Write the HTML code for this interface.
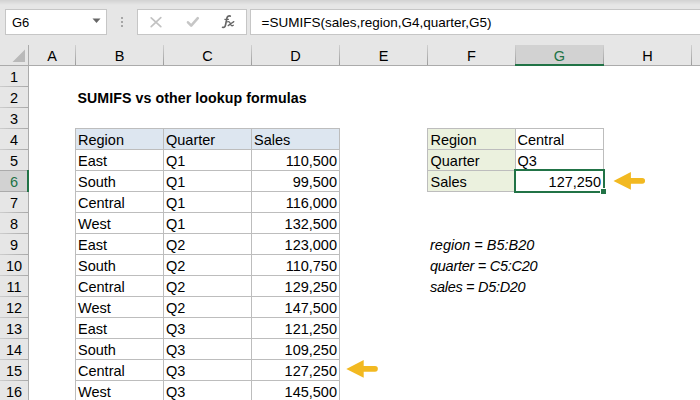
<!DOCTYPE html>
<html><head><meta charset="utf-8">
<style>
*{margin:0;padding:0;box-sizing:border-box}
html,body{width:700px;height:400px;overflow:hidden;background:#fff}
body{position:relative;font-family:"Liberation Sans",sans-serif;color:#000}
.a{position:absolute}
.box{background:#fff;border:1px solid #c6c6c6;top:9px;height:26px}
.dot{width:2px;height:2px;background:#a6a6a6}
.t{position:absolute;white-space:nowrap;font-size:14.5px;line-height:16px}
.vs{position:absolute;width:1px;background:linear-gradient(#d0d0d0,#9c9c9c)}
.r{text-align:right}
.c{text-align:center}
</style></head><body>
<div class="a" style="left:0px;top:0px;width:700px;height:65px;background:#e6e6e6;"></div>
<div class="a" style="left:0px;top:0px;width:700px;height:5px;background:linear-gradient(#d2d2d2 0%,#d8d8d8 30%,#e6e6e6 100%);"></div>
<div class="a box" style="left:5px;width:102px"></div>
<div class="t" style="left:12px;top:15.3px;font-size:13px">G6</div>
<svg class="a" style="left:92px;top:18px" width="9" height="6"><path d="M0.5 0.5 L8.5 0.5 L4.5 5 Z" fill="#666"/></svg>
<div class="a dot" style="left:121px;top:17px"></div>
<div class="a dot" style="left:121px;top:21px"></div>
<div class="a dot" style="left:121px;top:25px"></div>
<div class="a box" style="left:137px;width:110px"></div>
<svg class="a" style="left:148px;top:15px" width="16" height="14"><path d="M3.2 2.8 L12.8 11.6 M12.8 2.6 L3.2 11.6" stroke="#c2c2c2" stroke-width="1.7" fill="none" stroke-linecap="round"/></svg>
<svg class="a" style="left:184px;top:15px" width="17" height="14"><path d="M4 7.3 L7.2 10.6 L13.8 3.2" stroke="#c6c6c6" stroke-width="2.6" fill="none" stroke-linecap="round" stroke-linejoin="round"/></svg>
<svg class="a" style="left:218px;top:12px" width="20" height="20"><path d="M4.6 15.3 C6.3 16 7.2 14.6 7.6 12.6 L8.9 6.2 C9.3 4.3 10.5 3.6 12.3 4.1" stroke="#666" stroke-width="1.7" fill="none" stroke-linecap="round"/><path d="M6.4 7.4 L10.9 7.4" stroke="#666" stroke-width="1.2"/><path d="M9.6 9.8 C10.8 9.3 11.6 9.9 12.1 11 L13.1 13.1 C13.5 13.9 14.3 13.9 15.3 13.3 M15.8 9.6 C14.2 10.6 12.2 12.4 10.2 13.6" stroke="#666" stroke-width="1.3" fill="none" stroke-linecap="round"/></svg>
<div class="a box" style="left:250px;width:460px"></div>
<div class="t" style="left:261.5px;top:15px;font-size:13.5px">=SUMIFS(sales,region,G4,quarter,G5)</div>
<div class="a" style="left:516px;top:45px;width:87px;height:19px;background:#d2d2d2;"></div>
<div class="a" style="left:0px;top:65px;width:515px;height:1px;background:#ababab;"></div>
<div class="a" style="left:604px;top:65px;width:96px;height:1px;background:#ababab;"></div>
<svg class="a" style="left:12px;top:49px" width="14" height="14"><path d="M0.5 13 L13 13 L13 0.5 Z" fill="#b9b9b9"/></svg>
<div class="vs" style="left:28px;top:45px;height:20px"></div>
<div class="vs" style="left:75px;top:45px;height:20px"></div>
<div class="vs" style="left:163px;top:45px;height:20px"></div>
<div class="vs" style="left:251px;top:45px;height:20px"></div>
<div class="vs" style="left:339px;top:45px;height:20px"></div>
<div class="vs" style="left:427px;top:45px;height:20px"></div>
<div class="vs" style="left:515px;top:45px;height:20px"></div>
<div class="vs" style="left:603px;top:45px;height:20px"></div>
<div class="vs" style="left:691px;top:45px;height:20px"></div>
<div class="a" style="left:515px;top:64px;width:89px;height:2px;background:#217346;"></div>
<div class="t c" style="left:29px;top:48px;width:46px">A</div>
<div class="t c" style="left:76px;top:48px;width:87px">B</div>
<div class="t c" style="left:164px;top:48px;width:87px">C</div>
<div class="t c" style="left:252px;top:48px;width:87px">D</div>
<div class="t c" style="left:340px;top:48px;width:87px">E</div>
<div class="t c" style="left:428px;top:48px;width:87px">F</div>
<div class="t c" style="left:516px;top:48px;width:87px;color:#217346">G</div>
<div class="t c" style="left:604px;top:48px;width:87px">H</div>
<div class="a" style="left:0px;top:66px;width:28px;height:334px;background:#e6e6e6;"></div>
<div class="a" style="left:28px;top:45px;width:1px;height:355px;background:#ababab;"></div>
<div class="a" style="left:0px;top:86px;width:28px;height:1px;background:linear-gradient(to right,#cdcdcd,#a9a9a9);"></div>
<div class="t c" style="left:0px;top:69px;width:28px">1</div>
<div class="a" style="left:0px;top:107px;width:28px;height:1px;background:linear-gradient(to right,#cdcdcd,#a9a9a9);"></div>
<div class="t c" style="left:0px;top:90px;width:28px">2</div>
<div class="a" style="left:0px;top:128px;width:28px;height:1px;background:linear-gradient(to right,#cdcdcd,#a9a9a9);"></div>
<div class="t c" style="left:0px;top:111px;width:28px">3</div>
<div class="a" style="left:0px;top:149px;width:28px;height:1px;background:linear-gradient(to right,#cdcdcd,#a9a9a9);"></div>
<div class="t c" style="left:0px;top:132px;width:28px">4</div>
<div class="a" style="left:0px;top:170px;width:28px;height:1px;background:linear-gradient(to right,#cdcdcd,#a9a9a9);"></div>
<div class="t c" style="left:0px;top:153px;width:28px">5</div>
<div class="a" style="left:0px;top:191px;width:28px;height:1px;background:linear-gradient(to right,#cdcdcd,#a9a9a9);"></div>
<div class="a" style="left:0px;top:171px;width:27px;height:20px;background:#d2d2d2;"></div>
<div class="a" style="left:0px;top:170px;width:27px;height:1px;background:#ababab;"></div>
<div class="a" style="left:0px;top:191px;width:27px;height:1px;background:#ababab;"></div>
<div class="a" style="left:27px;top:170px;width:2px;height:22px;background:#217346;"></div>
<div class="t c" style="left:0px;top:174px;width:28px;color:#217346">6</div>
<div class="a" style="left:0px;top:212px;width:28px;height:1px;background:linear-gradient(to right,#cdcdcd,#a9a9a9);"></div>
<div class="t c" style="left:0px;top:195px;width:28px">7</div>
<div class="a" style="left:0px;top:233px;width:28px;height:1px;background:linear-gradient(to right,#cdcdcd,#a9a9a9);"></div>
<div class="t c" style="left:0px;top:216px;width:28px">8</div>
<div class="a" style="left:0px;top:254px;width:28px;height:1px;background:linear-gradient(to right,#cdcdcd,#a9a9a9);"></div>
<div class="t c" style="left:0px;top:237px;width:28px">9</div>
<div class="a" style="left:0px;top:275px;width:28px;height:1px;background:linear-gradient(to right,#cdcdcd,#a9a9a9);"></div>
<div class="t c" style="left:0px;top:258px;width:28px">10</div>
<div class="a" style="left:0px;top:296px;width:28px;height:1px;background:linear-gradient(to right,#cdcdcd,#a9a9a9);"></div>
<div class="t c" style="left:0px;top:279px;width:28px">11</div>
<div class="a" style="left:0px;top:317px;width:28px;height:1px;background:linear-gradient(to right,#cdcdcd,#a9a9a9);"></div>
<div class="t c" style="left:0px;top:300px;width:28px">12</div>
<div class="a" style="left:0px;top:338px;width:28px;height:1px;background:linear-gradient(to right,#cdcdcd,#a9a9a9);"></div>
<div class="t c" style="left:0px;top:321px;width:28px">13</div>
<div class="a" style="left:0px;top:359px;width:28px;height:1px;background:linear-gradient(to right,#cdcdcd,#a9a9a9);"></div>
<div class="t c" style="left:0px;top:342px;width:28px">14</div>
<div class="a" style="left:0px;top:380px;width:28px;height:1px;background:linear-gradient(to right,#cdcdcd,#a9a9a9);"></div>
<div class="t c" style="left:0px;top:363px;width:28px">15</div>
<div class="a" style="left:0px;top:401px;width:28px;height:1px;background:linear-gradient(to right,#cdcdcd,#a9a9a9);"></div>
<div class="t c" style="left:0px;top:384px;width:28px">16</div>
<div class="t" style="left:77.5px;top:90px;font-weight:bold;font-size:14.2px;letter-spacing:0.07px">SUMIFS vs other lookup formulas</div>
<div class="a" style="left:76px;top:129px;width:263px;height:20px;background:#dde6f0;"></div>
<div class="t" style="left:78px;top:132px;">Region</div>
<div class="t" style="left:166px;top:132px;">Quarter</div>
<div class="t" style="left:254px;top:132px;">Sales</div>
<div class="t" style="left:78px;top:153px;">East</div>
<div class="t" style="left:166px;top:153px;">Q1</div>
<div class="t r" style="left:252px;top:153px;width:85px">110,500</div>
<div class="t" style="left:78px;top:174px;">South</div>
<div class="t" style="left:166px;top:174px;">Q1</div>
<div class="t r" style="left:252px;top:174px;width:85px">99,500</div>
<div class="t" style="left:78px;top:195px;">Central</div>
<div class="t" style="left:166px;top:195px;">Q1</div>
<div class="t r" style="left:252px;top:195px;width:85px">116,000</div>
<div class="t" style="left:78px;top:216px;">West</div>
<div class="t" style="left:166px;top:216px;">Q1</div>
<div class="t r" style="left:252px;top:216px;width:85px">132,500</div>
<div class="t" style="left:78px;top:237px;">East</div>
<div class="t" style="left:166px;top:237px;">Q2</div>
<div class="t r" style="left:252px;top:237px;width:85px">123,000</div>
<div class="t" style="left:78px;top:258px;">South</div>
<div class="t" style="left:166px;top:258px;">Q2</div>
<div class="t r" style="left:252px;top:258px;width:85px">110,750</div>
<div class="t" style="left:78px;top:279px;">Central</div>
<div class="t" style="left:166px;top:279px;">Q2</div>
<div class="t r" style="left:252px;top:279px;width:85px">129,250</div>
<div class="t" style="left:78px;top:300px;">West</div>
<div class="t" style="left:166px;top:300px;">Q2</div>
<div class="t r" style="left:252px;top:300px;width:85px">147,500</div>
<div class="t" style="left:78px;top:321px;">East</div>
<div class="t" style="left:166px;top:321px;">Q3</div>
<div class="t r" style="left:252px;top:321px;width:85px">121,250</div>
<div class="t" style="left:78px;top:342px;">South</div>
<div class="t" style="left:166px;top:342px;">Q3</div>
<div class="t r" style="left:252px;top:342px;width:85px">109,250</div>
<div class="t" style="left:78px;top:363px;">Central</div>
<div class="t" style="left:166px;top:363px;">Q3</div>
<div class="t r" style="left:252px;top:363px;width:85px">127,250</div>
<div class="t" style="left:78px;top:384px;">West</div>
<div class="t" style="left:166px;top:384px;">Q3</div>
<div class="t r" style="left:252px;top:384px;width:85px">145,500</div>
<div class="a" style="left:75px;top:128px;width:1px;height:272px;background:#bdbdbd;"></div>
<div class="a" style="left:163px;top:128px;width:1px;height:272px;background:#bdbdbd;"></div>
<div class="a" style="left:251px;top:128px;width:1px;height:272px;background:#bdbdbd;"></div>
<div class="a" style="left:339px;top:128px;width:1px;height:272px;background:#bdbdbd;"></div>
<div class="a" style="left:75px;top:128px;width:265px;height:1px;background:#bdbdbd;"></div>
<div class="a" style="left:75px;top:149px;width:265px;height:1px;background:#bdbdbd;"></div>
<div class="a" style="left:75px;top:170px;width:265px;height:1px;background:#bdbdbd;"></div>
<div class="a" style="left:75px;top:191px;width:265px;height:1px;background:#bdbdbd;"></div>
<div class="a" style="left:75px;top:212px;width:265px;height:1px;background:#bdbdbd;"></div>
<div class="a" style="left:75px;top:233px;width:265px;height:1px;background:#bdbdbd;"></div>
<div class="a" style="left:75px;top:254px;width:265px;height:1px;background:#bdbdbd;"></div>
<div class="a" style="left:75px;top:275px;width:265px;height:1px;background:#bdbdbd;"></div>
<div class="a" style="left:75px;top:296px;width:265px;height:1px;background:#bdbdbd;"></div>
<div class="a" style="left:75px;top:317px;width:265px;height:1px;background:#bdbdbd;"></div>
<div class="a" style="left:75px;top:338px;width:265px;height:1px;background:#bdbdbd;"></div>
<div class="a" style="left:75px;top:359px;width:265px;height:1px;background:#bdbdbd;"></div>
<div class="a" style="left:75px;top:380px;width:265px;height:1px;background:#bdbdbd;"></div>
<div class="a" style="left:75px;top:401px;width:265px;height:1px;background:#bdbdbd;"></div>
<div class="a" style="left:428px;top:129px;width:87px;height:62px;background:#ebf1de;"></div>
<div class="t" style="left:430.5px;top:132px;">Region</div>
<div class="t" style="left:430.5px;top:153px;">Quarter</div>
<div class="t" style="left:430.5px;top:174px;">Sales</div>
<div class="t" style="left:517.5px;top:132px;">Central</div>
<div class="t" style="left:517.5px;top:153px;">Q3</div>
<div class="t r" style="left:516px;top:174px;width:85px">127,250</div>
<div class="a" style="left:427px;top:128px;width:1px;height:64px;background:#bdbdbd;"></div>
<div class="a" style="left:515px;top:128px;width:1px;height:64px;background:#bdbdbd;"></div>
<div class="a" style="left:603px;top:128px;width:1px;height:64px;background:#bdbdbd;"></div>
<div class="a" style="left:427px;top:128px;width:177px;height:1px;background:#bdbdbd;"></div>
<div class="a" style="left:427px;top:149px;width:177px;height:1px;background:#bdbdbd;"></div>
<div class="a" style="left:427px;top:170px;width:177px;height:1px;background:#bdbdbd;"></div>
<div class="a" style="left:427px;top:191px;width:177px;height:1px;background:#bdbdbd;"></div>
<div class="a" style="left:514px;top:169px;width:91px;height:2px;background:#217346;"></div>
<div class="a" style="left:514px;top:169px;width:2px;height:24px;background:#217346;"></div>
<div class="a" style="left:603px;top:169px;width:2px;height:19px;background:#217346;"></div>
<div class="a" style="left:514px;top:191px;width:86px;height:2px;background:#217346;"></div>
<div class="a" style="left:600px;top:188px;width:7px;height:7px;background:#fff;"></div>
<div class="a" style="left:601px;top:189px;width:5px;height:5px;background:#217346;"></div>
<div class="t" style="left:430px;top:237px;font-style:italic">region = B5:B20</div>
<div class="t" style="left:430px;top:258px;font-style:italic;letter-spacing:-0.27px">quarter = C5:C20</div>
<div class="t" style="left:430px;top:279px;font-style:italic;letter-spacing:-0.3px">sales = D5:D20</div>
<svg class="a" style="left:345px;top:359px" width="36" height="22"><path d="M1.30 10.00 L18.70 0.90 L18.70 7.00 L30.00 7.00 A2.85 2.85 0 0 1 30.00 12.70 L18.70 12.70 L18.70 18.80 Z" fill="#f2b921"/></svg>
<svg class="a" style="left:612px;top:171px" width="36" height="22"><path d="M1.50 10.00 L18.90 0.90 L18.90 7.00 L30.20 7.00 A2.85 2.85 0 0 1 30.20 12.70 L18.90 12.70 L18.90 18.80 Z" fill="#f2b921"/></svg>
</body></html>
